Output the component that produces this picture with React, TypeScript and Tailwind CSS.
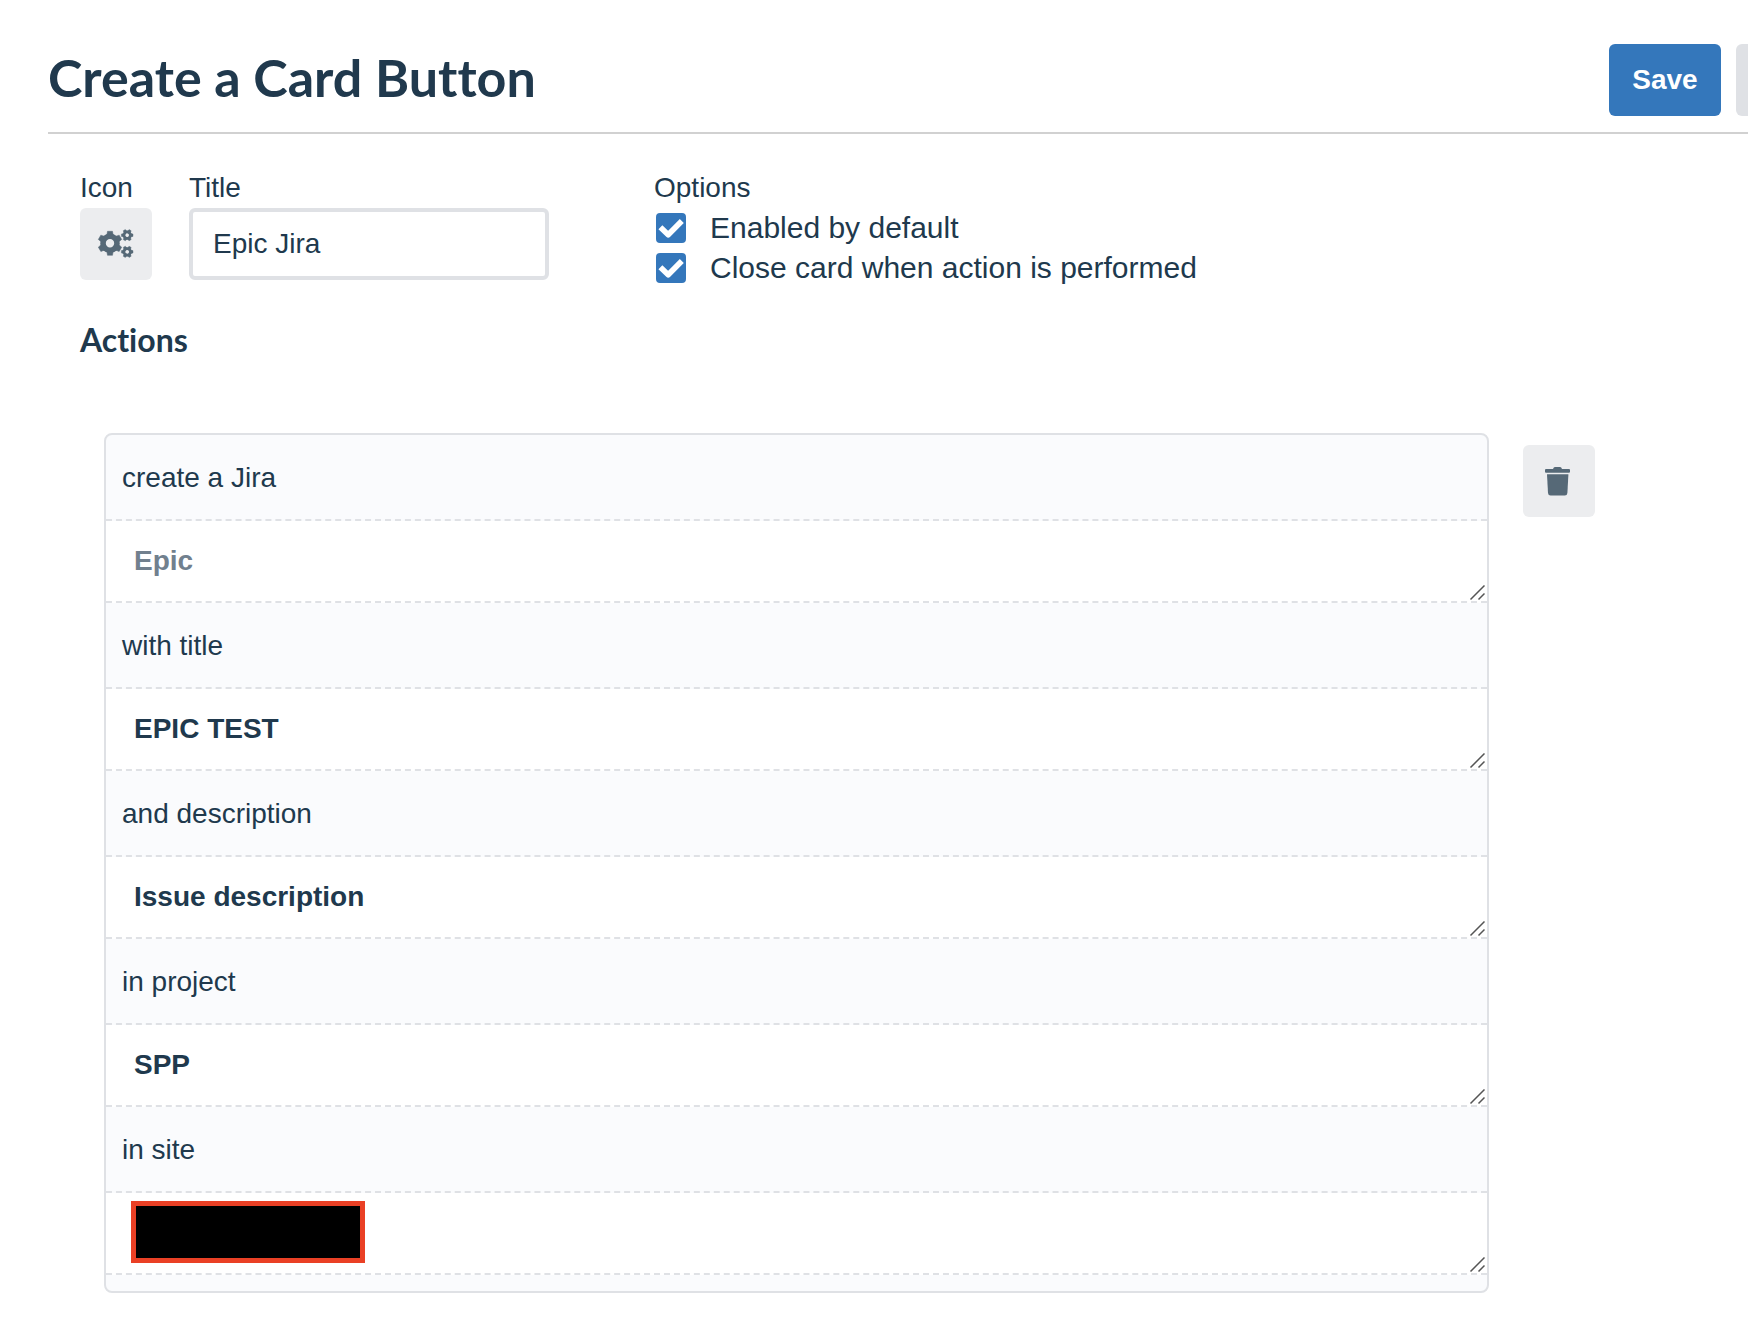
import React, { useState } from 'react';

const TEETH = [0, 60, 120, 180, 240, 300];

const CogsIcon = () => (
  <svg viewBox="0 0 48 48" className="h-12 w-12" fill="currentColor" stroke="currentColor">
    <g transform="translate(18 23.3)">
      <circle r="7" fill="none" strokeWidth="5.6" />
      {TEETH.map((angle) => (
        <path key={angle} d="M-3.2 -8 L-2.5 -12 H2.5 L3.2 -8 Z" strokeWidth="0.5" strokeLinejoin="round" transform={`rotate(${angle})`} />
      ))}
    </g>
    {[15.2, 31.8].map((y) => (
      <g key={y} transform={`translate(35.2 ${y}) rotate(30)`}>
        <circle r="3.2" fill="none" strokeWidth="2.8" />
        {TEETH.map((angle) => (
          <path key={angle} d="M-1.6 -3.8 L-1.2 -5.8 H1.2 L1.6 -3.8 Z" strokeWidth="0.4" strokeLinejoin="round" transform={`rotate(${angle})`} />
        ))}
      </g>
    ))}
  </svg>
);

const TrashIcon = () => (
  <svg viewBox="0 0 48 48" className="h-12 w-12" fill="currentColor">
    <path d="M18 12 L18.8 10.6 Q19.2 10 20 10 H25 Q25.8 10 26.2 10.6 L27 12 H34 Q35 12 35 13 V14.8 Q35 15.8 34 15.8 H11 Q10 15.8 10 14.8 V13 Q10 12 11 12 Z" />
    <path d="M12 17.2 H33.4 L32.4 36 Q32.2 38.6 29.8 38.6 H15.6 Q13.2 38.6 13 36 Z" />
  </svg>
);

interface OptionProps {
  label: string;
}

const Option: React.FC<OptionProps> = ({ label }) => {
  const [checked, setChecked] = useState(true);

  return (
    <label className="flex h-10 items-center gap-6 pl-0.5 text-[30px] leading-10">
      <span className="relative h-[30px] w-[30px] shrink-0">
        <input
          type="checkbox"
          checked={checked}
          onChange={(e) => setChecked(e.target.checked)}
          className="block h-full w-full appearance-none rounded border-2 border-[#dfe1e5] bg-white checked:border-[#3477bb] checked:bg-[#3477bb]"
        />
        {checked && (
          <svg viewBox="0 0 30 30" className="pointer-events-none absolute inset-0 h-full w-full" fill="none" stroke="#ffffff" strokeWidth="5.6">
            <path d="M4.4 14.2 L12.2 21.8 L25.8 8" strokeLinejoin="round" />
          </svg>
        )}
      </span>
      {label}
    </label>
  );
};

// Two diagonal strokes in the corner of a resizable field
const ResizeGrip = () => (
  <svg viewBox="0 0 16 16" className="pointer-events-none absolute right-0.5 bottom-0 h-4 w-4" fill="none" stroke="#555555" strokeWidth="1.5">
    <path d="M1.5 14.5 L15.5 0.5 M9.5 14.5 L15.5 8.5" />
  </svg>
);

interface Field {
  id: string;
  label: string;
  value?: string;
  placeholder?: string;
  redacted?: boolean;
}

const FIELDS: Field[] = [
  { id: 'type', label: 'create a Jira', placeholder: 'Epic' },
  { id: 'title', label: 'with title', value: 'EPIC TEST' },
  { id: 'description', label: 'and description', value: 'Issue description' },
  { id: 'project', label: 'in project', value: 'SPP' },
  { id: 'site', label: 'in site', redacted: true },
];

const ActionField: React.FC<{ field: Field }> = ({ field }) => (
  <>
    <label
      htmlFor={field.id}
      className="block border-b-2 border-dashed border-[#dfe1e5] px-4 pt-[23px] pb-[21px] leading-10"
    >
      {field.label}
    </label>
    <div className="relative border-b-2 border-dashed border-[#dfe1e5] bg-white">
      <textarea
        id={field.id}
        rows={1}
        defaultValue={field.value}
        placeholder={field.placeholder}
        className="block h-20 w-full resize-none overflow-hidden px-7 py-5 leading-10 font-bold outline-none placeholder:text-[#71808e]"
      />
      {field.redacted && (
        <div className="absolute top-2 left-[25px] h-[62px] w-[234px] border-5 border-[#ea4025] bg-black" />
      )}
      <ResizeGrip />
    </div>
  </>
);

export default function App() {
  return (
    <div className="overflow-x-hidden bg-white pb-12 pl-12 font-['Liberation_Sans',Arial,sans-serif] text-[28px] text-[#20394d]">
      <header className="flex items-start justify-between border-b-2 border-[#d1d1d1] pt-11 pb-4">
        <h1 className="font-[Lato,sans-serif] text-[52px] leading-[66px] font-bold [font-variant-ligatures:none]">
          Create a Card Button
        </h1>
        <div className="-mr-[100px] flex shrink-0 gap-[15px]">
          <button type="button" className="h-[72px] w-28 rounded-md bg-[#3477bb] font-bold text-white">
            Save
          </button>
          <button type="button" aria-label="Cancel" className="h-[72px] w-28 rounded-md bg-[#dfe1e5]" />
        </div>
      </header>

      <main className="pl-8">
        <div className="flex items-start pt-[34px]">
          <div className="mr-[37px]">
            <span className="block leading-10">Icon</span>
            <button
              type="button"
              aria-label="Choose icon"
              className="flex h-[72px] w-[72px] items-center justify-center rounded-md bg-[#ecedef] text-[#566977]"
            >
              <CogsIcon />
            </button>
          </div>
          <div className="mr-[105px]">
            <label htmlFor="button-title" className="block leading-10">
              Title
            </label>
            <input
              id="button-title"
              type="text"
              defaultValue="Epic Jira"
              className="block h-[72px] w-[360px] rounded-md border-4 border-[#dfe1e5] bg-white px-5 outline-none"
            />
          </div>
          <fieldset>
            <legend className="leading-10">Options</legend>
            <Option label="Enabled by default" />
            <Option label="Close card when action is performed" />
          </fieldset>
        </div>

        <h2 className="mt-8 font-[Lato,sans-serif] text-[32px] leading-10 font-bold [font-variant-ligatures:none]">
          Actions
        </h2>

        <div className="mt-[73px] mr-[153px] ml-6 flex items-start gap-[34px]">
          <section className="min-w-0 flex-1 overflow-hidden rounded-lg border-2 border-[#dfe1e5] bg-[#fafbfd] pb-4">
            {FIELDS.map((field) => (
              <ActionField key={field.id} field={field} />
            ))}
          </section>
          <button
            type="button"
            aria-label="Delete action"
            className="mt-3 flex h-[72px] w-[72px] shrink-0 items-center justify-center rounded-md bg-[#ecedef] text-[#566977]"
          >
            <TrashIcon />
          </button>
        </div>
      </main>
    </div>
  );
}
